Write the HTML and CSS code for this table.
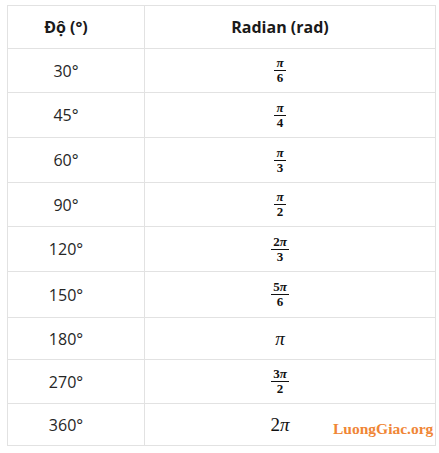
FILE: index.html
```html
<!DOCTYPE html>
<html>
<head>
<meta charset="utf-8">
<link rel="stylesheet" href="styles.css">
</head>
<body>
<div class="page">
  <table class="conv">
    <thead>
      <tr class="h43"><th class="c1">Độ (°)</th><th class="c2">Radian (rad)</th></tr>
    </thead>
    <tbody>
      <tr class="h44"><td>30°</td><td><span class="frac"><span class="num"><i>π</i></span><span class="den">6</span></span></td></tr>
      <tr class="h45"><td>45°</td><td><span class="frac"><span class="num"><i>π</i></span><span class="den">4</span></span></td></tr>
      <tr class="h45"><td>60°</td><td><span class="frac"><span class="num"><i>π</i></span><span class="den">3</span></span></td></tr>
      <tr class="h44"><td>90°</td><td><span class="frac"><span class="num"><i>π</i></span><span class="den">2</span></span></td></tr>
      <tr class="h45"><td>120°</td><td><span class="frac"><span class="num">2<i>π</i></span><span class="den">3</span></span></td></tr>
      <tr class="h46"><td>150°</td><td><span class="frac"><span class="num">5<i>π</i></span><span class="den">6</span></span></td></tr>
      <tr class="h42"><td>180°</td><td><span class="math"><i>π</i></span></td></tr>
      <tr class="h44"><td>270°</td><td><span class="frac"><span class="num">3<i>π</i></span><span class="den">2</span></span></td></tr>
      <tr class="h42"><td>360°</td><td><span class="math">2<i>π</i></span></td></tr>
    </tbody>
  </table>
  <div class="watermark">LuongGiac.org</div>
</div>
</body>
</html>
```
FILE: styles.css
```css
html, body {
  margin: 0;
  padding: 0;
  background: #ffffff;
}
.page {
  position: relative;
  padding: 5px 0 0 7px;
  width: 439px;
  height: 453px;
  box-sizing: border-box;
}
.conv {
  border-collapse: collapse;
  width: 429px;
  table-layout: fixed;
  font-family: "Open Sans", "Noto Sans", sans-serif;
  font-size: 16px;
  color: #262626;
}
.conv th, .conv td {
  border: 1px solid #e2e2e2;
  text-align: center;
  vertical-align: middle;
  padding: 0 20px 0 0;
}
.conv th {
  font-weight: 700;
  color: #1a1a1a;
}
.c1 { width: 116px; }
.h42 { height: 42px; }
.h43 { height: 43px; }
.h44 { height: 44px; }
.h45 { height: 45px; }
.h46 { height: 46px; }
.frac {
  display: inline-flex;
  flex-direction: column;
  align-items: center;
  vertical-align: middle;
  font-family: "Liberation Serif", "DejaVu Serif", serif;
  font-size: 13px;
  font-weight: 700;
  color: #111111;
  line-height: 12px;
}
.frac .num {
  padding: 0 2px 1px;
  border-bottom: 1px solid #111111;
}
.frac .den {
  padding-top: 1px;
}
.frac i, .math i {
  font-style: italic;
}
.math {
  font-family: "Liberation Serif", "DejaVu Serif", serif;
  font-size: 19px;
  color: #111111;
}
.watermark {
  position: absolute;
  left: 333px;
  top: 420px;
  font-family: "Liberation Serif", "DejaVu Serif", serif;
  font-weight: 700;
  font-size: 15.5px;
  color: #f08636;
}
```
